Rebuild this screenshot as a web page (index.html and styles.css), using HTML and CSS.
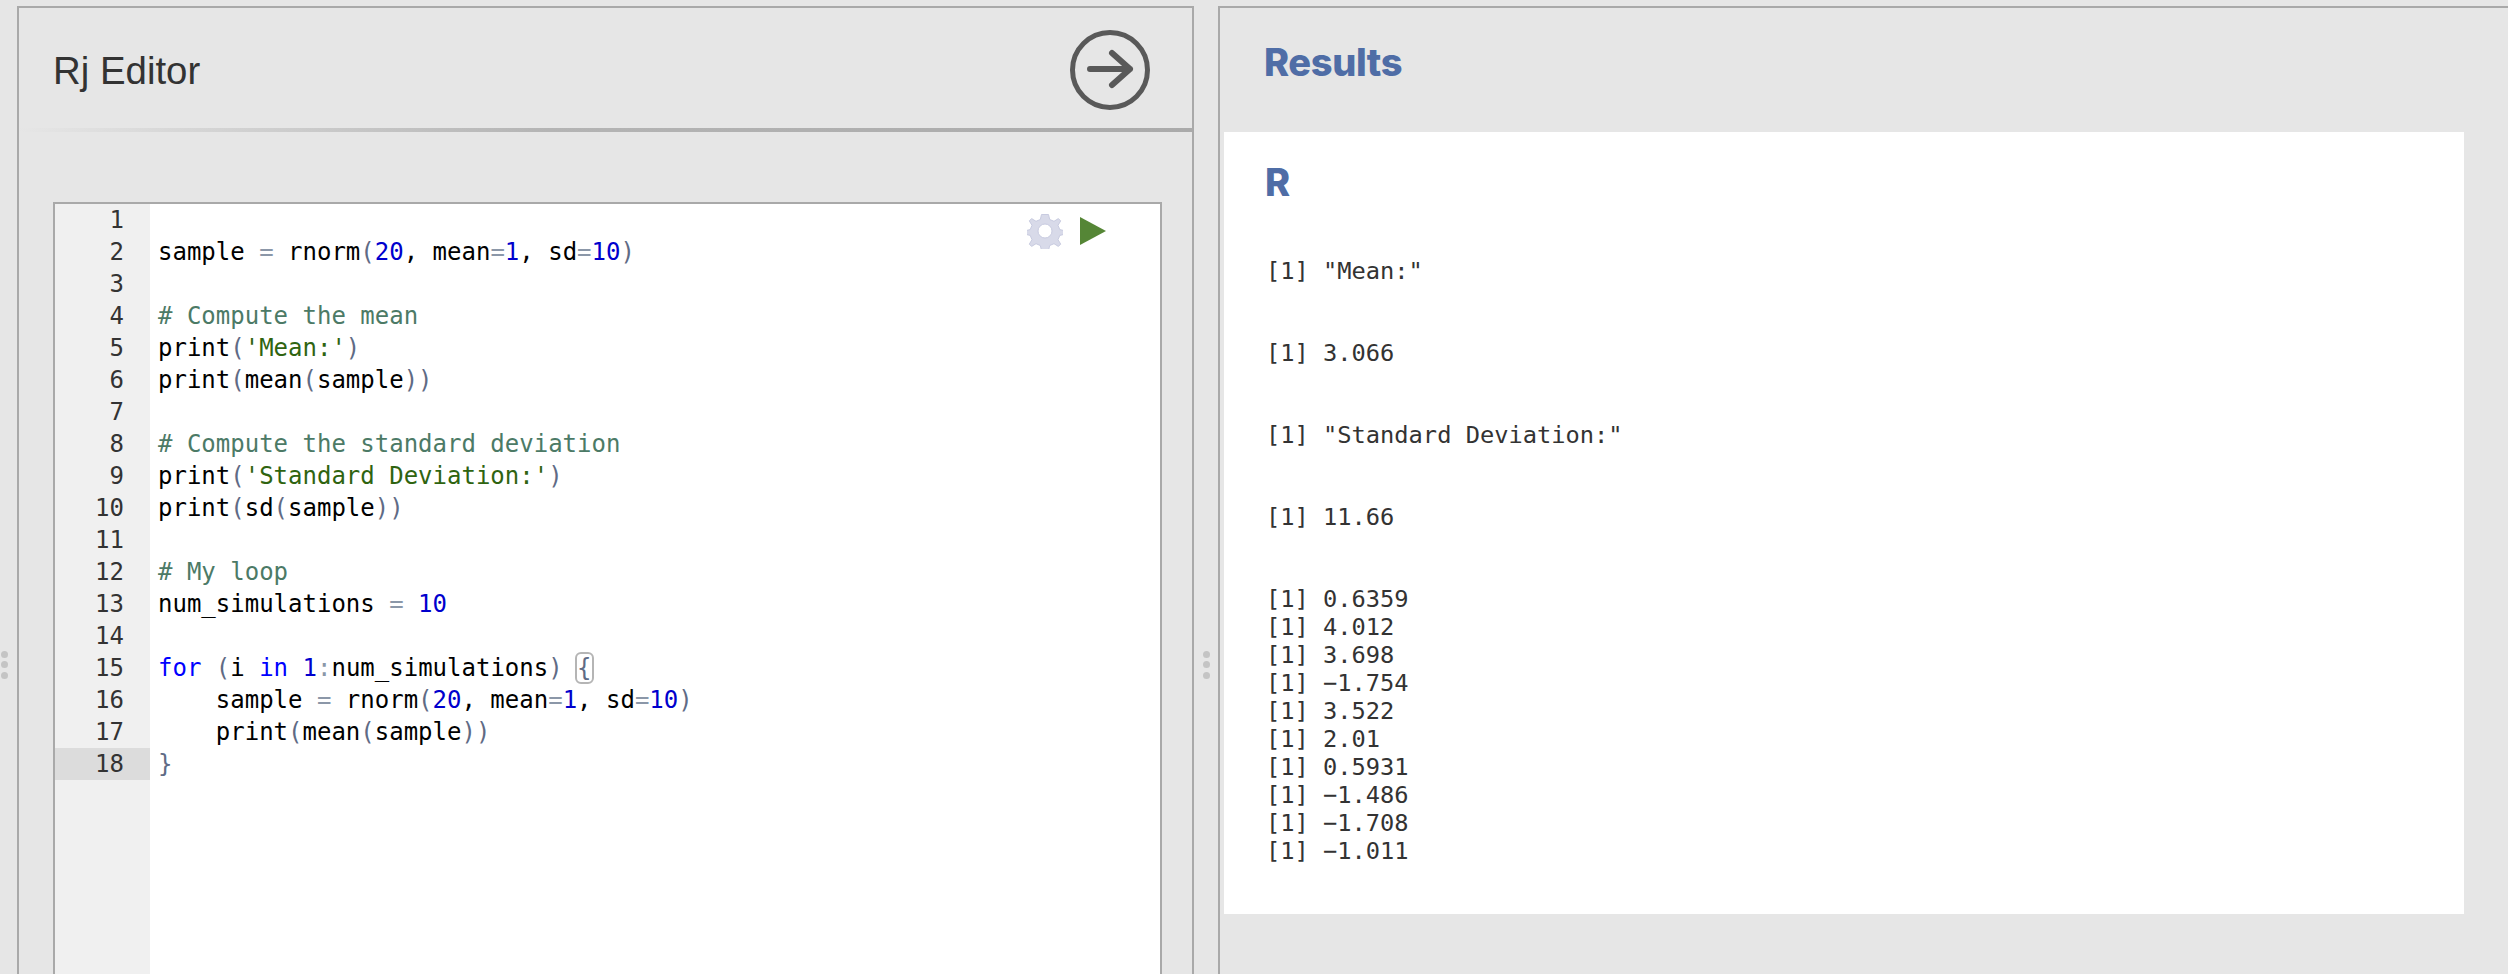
FILE: index.html
```
<!DOCTYPE html>
<html lang="en">
<head>
<meta charset="utf-8">
<title>Rj Editor</title>
<link rel="stylesheet" href="styles.css">
</head>
<body>
<div class="app">
  <section class="panel editor-panel">
    <header class="editor-header">
      <h1 class="editor-title">Rj Editor</h1>
      <svg class="run-circle" width="80" height="80" viewBox="0 0 80 80" fill="none" stroke="#595959" stroke-linecap="round" stroke-linejoin="round">
        <circle cx="40" cy="40" r="37.5" stroke-width="5"/>
        <path d="M20 39H60M42 23L60 39L42 55" stroke-width="6"/>
      </svg>
    </header>
    <div class="editor">
      <div class="gutter">
        <div>1</div><div>2</div><div>3</div><div>4</div><div>5</div><div>6</div><div>7</div><div>8</div><div>9</div><div>10</div><div>11</div><div>12</div><div>13</div><div>14</div><div>15</div><div>16</div><div>17</div><div class="active">18</div>
      </div>
      <div class="code">
        <div class="line"></div>
        <div class="line">sample <span class="op">=</span> rnorm<span class="p">(</span><span class="n">20</span>, mean<span class="op">=</span><span class="n">1</span>, sd<span class="op">=</span><span class="n">10</span><span class="p">)</span></div>
        <div class="line"></div>
        <div class="line c"># Compute the mean</div>
        <div class="line">print<span class="p">(</span><span class="s">'Mean:'</span><span class="p">)</span></div>
        <div class="line">print<span class="p">(</span>mean<span class="p">(</span>sample<span class="p">))</span></div>
        <div class="line"></div>
        <div class="line c"># Compute the standard deviation</div>
        <div class="line">print<span class="p">(</span><span class="s">'Standard Deviation:'</span><span class="p">)</span></div>
        <div class="line">print<span class="p">(</span>sd<span class="p">(</span>sample<span class="p">))</span></div>
        <div class="line"></div>
        <div class="line c"># My loop</div>
        <div class="line">num_simulations <span class="op">=</span> <span class="n">10</span></div>
        <div class="line"></div>
        <div class="line"><span class="k">for</span> <span class="p">(</span>i <span class="k">in</span> <span class="n">1</span><span class="op">:</span>num_simulations<span class="p">)</span> <span class="p match">{</span></div>
        <div class="line">    sample <span class="op">=</span> rnorm<span class="p">(</span><span class="n">20</span>, mean<span class="op">=</span><span class="n">1</span>, sd<span class="op">=</span><span class="n">10</span><span class="p">)</span></div>
        <div class="line">    print<span class="p">(</span>mean<span class="p">(</span>sample<span class="p">))</span></div>
        <div class="line"><span class="p">}</span></div>
      </div>
      <div class="tools">
        <svg width="36" height="36" viewBox="0 0 36 36">
          <path d="M14.5 1.5h7l1.2 5 4.3 1.8 4.4-2.7 2.3 2.3-2.7 4.4 1.8 4.3 5 1.2v3.4l-5 1.2-1.8 4.3 2.7 4.4-2.3 2.3-4.4-2.7-4.3 1.8-1.2 5h-7l-1.2-5-4.3-1.8-4.4 2.7-2.3-2.3 2.7-4.4-1.8-4.3-5-1.2v-3.4l5-1.2 1.8-4.3-2.7-4.4 2.3-2.3 4.4 2.7 4.3-1.8z" fill="#d8dae9" stroke="#c8cbe0" stroke-linejoin="round"/>
          <circle cx="18" cy="18" r="7" fill="#fff" stroke="#c8cbe0"/>
        </svg>
        <svg width="26" height="28" viewBox="0 0 26 28"><path d="M0 0L26 14L0 28Z" fill="#558636"/></svg>
      </div>
    </div>
    <i class="dots dots-left"><b></b><b></b><b></b></i>
  </section>
  <section class="panel results-panel">
    <h2 class="results-title">Results</h2>
    <div class="results">
      <h3 class="results-heading">R</h3>
      <pre class="out">[1] "Mean:"</pre>
      <pre class="out">[1] 3.066</pre>
      <pre class="out">[1] "Standard Deviation:"</pre>
      <pre class="out">[1] 11.66</pre>
      <pre class="out">[1] 0.6359
[1] 4.012
[1] 3.698
[1] −1.754
[1] 3.522
[1] 2.01
[1] 0.5931
[1] −1.486
[1] −1.708
[1] −1.011</pre>
    </div>
    <i class="dots dots-mid"><b></b><b></b><b></b></i>
  </section>
</div>
</body>
</html>
```
FILE: styles.css
```
* { box-sizing: border-box; }
html, body { margin: 0; height: 100%; }
body { background: #e6e6e6; overflow: hidden; }

.app {
  display: flex;
  gap: 24px;
  height: 974px;
  padding: 6px 0 0 17px;
}
.panel {
  position: relative;
  display: flex;
  flex-direction: column;
  border: 2px solid #a9a9a9;
  border-bottom: 0;
}
.editor-panel { width: 1177px; flex: none; }
.results-panel { flex: 1; border-right: 0; }

.editor-header {
  height: 124px;
  flex: none;
  display: flex;
  align-items: center;
  justify-content: space-between;
  padding: 4px 42px 0 34px;
  border-bottom: 4px solid;
  border-image: linear-gradient(to right, #e6e6e6, #b4b4b4 45%, #aaaaaa) 1;
}
.editor-title {
  margin: 0;
  padding-top: 2px;
  font: 400 38.4px/1 "Liberation Sans", Arial, sans-serif;
  color: #333;
}

.editor {
  position: relative;
  flex: 1;
  display: flex;
  margin: 70px 30px 0 34px;
  background: #fff;
  border: 2px solid #a9a9a9;
  border-bottom: 0;
  font: 24px/32px "DejaVu Sans Mono", monospace;
}
.gutter {
  flex: none;
  width: 95px;
  background: #f0f0f0;
  color: #333;
  text-align: right;
}
.gutter div { height: 32px; padding-right: 26px; }
.gutter .active { background: #dcdcdc; }
.code { flex: 1; padding-left: 8px; color: #000; }
.line { height: 32px; white-space: pre; }
.op { color: #8b97a8; }
.p { color: #5f6b85; }
.n { color: #0000cd; }
.k { color: #0000ff; }
.c { color: #4c7a66; }
.s { color: #2f6410; }
.match { outline: 2px solid #b5b5b5; outline-offset: 0; border-radius: 4px; }

.tools {
  position: absolute;
  top: 9px;
  right: 54px;
  display: flex;
  align-items: center;
  gap: 17px;
}

.results-title {
  flex: none;
  height: 124px;
  margin: 0;
  padding: 31px 0 0 44px;
  font: 800 38px/46px Inter, sans-serif;
  letter-spacing: -0.4px;
  color: #4f6da6;
}
.results {
  width: 1240px;
  height: 782px;
  margin-left: 4px;
  padding: 27px 0 0 41px;
  background: #fff;
}
.results-heading {
  margin: 0 0 52px;
  font: 800 38px/46px Inter, sans-serif;
  color: #4f6da6;
}
.out {
  margin: 0 0 54px;
  padding-left: 1px;
  font: 23.7px/28px "DejaVu Sans Mono", monospace;
  color: #333;
}

.dots { position: absolute; top: 642.5px; display: flex; flex-direction: column; gap: 3.5px; }
.dots b { width: 7px; height: 7px; border-radius: 50%; background: #c4c4c4; }
.dots-left { left: -18.5px; }
.dots-mid { left: -17.5px; }
```
